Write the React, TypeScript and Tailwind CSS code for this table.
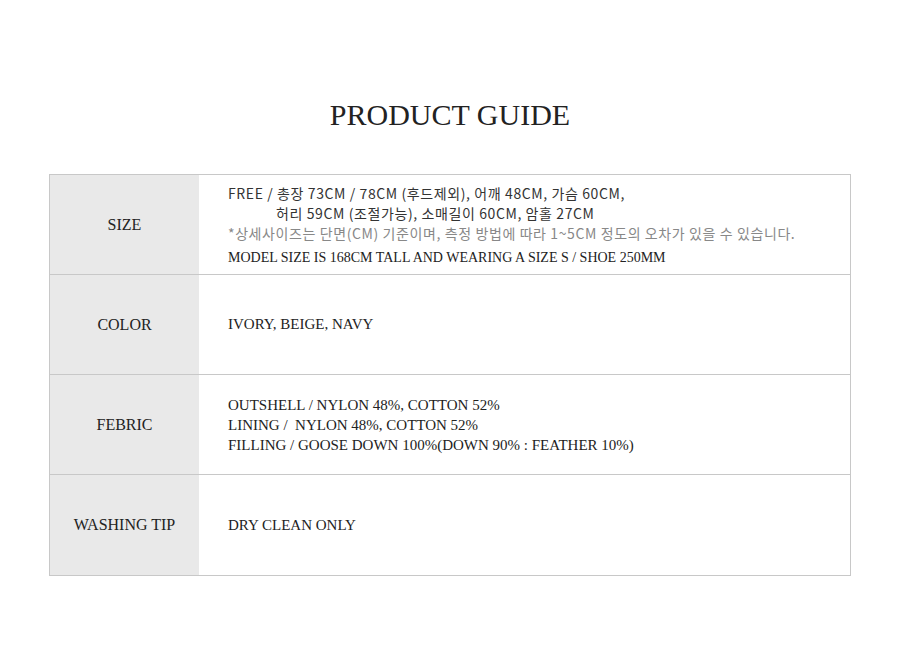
const serif = "font-['Liberation_Serif','Times_New_Roman',serif]";
const kr = "font-['Noto_Sans_CJK_KR','Noto_Sans',sans-serif]";

const Row = ({ label, children, last }: { label: string; children: React.ReactNode; last?: boolean }) => (
  <div className={`flex h-[100px] ${last ? '' : 'border-b border-[#c8c8c8]'}`}>
    <div className={`w-[149px] shrink-0 bg-[#e9e9e9] flex items-center justify-center text-[16px] text-[#222] ${serif}`}>
      {label}
    </div>
    <div className="flex-1 flex flex-col justify-center pl-[29px]">{children}</div>
  </div>
);

export default function App() {
  return (
    <div className="w-[900px] h-[649px] bg-white pt-[96px]">
      <h1 className={`text-center text-[30px] leading-[38px] text-[#222] ${serif}`}>PRODUCT GUIDE</h1>
      <div className="mx-[49px] mt-[40px] border border-[#c8c8c8]">
        <Row label="SIZE">
          <div className={`text-[14px] leading-[20px] tracking-[0.6px] text-[#333] ${kr}`}>
            <p className="pt-[2px]">FREE / 총장 73CM / 78CM (후드제외), 어깨 48CM, 가슴 60CM,</p>
            <p className="pl-[48px]">허리 59CM (조절가능), 소매길이 60CM, 암홀 27CM</p>
            <p className="text-[#888]">*상세사이즈는 단면(CM) 기준이며, 측정 방법에 따라 1~5CM 정도의 오차가 있을 수 있습니다.</p>
          </div>
          <p className={`mt-[4px] text-[14px] text-[#222] ${serif}`}>MODEL SIZE IS 168CM TALL AND WEARING A SIZE S / SHOE 250MM</p>
        </Row>
        <Row label="COLOR">
          <p className={`text-[15px] text-[#222] ${serif}`}>IVORY, BEIGE, NAVY</p>
        </Row>
        <Row label="FEBRIC">
          <div className={`text-[15px] leading-[20px] text-[#222] ${serif} whitespace-pre`}>
            <p>OUTSHELL / NYLON 48%, COTTON 52%</p>
            <p>LINING /  NYLON 48%, COTTON 52%</p>
            <p>FILLING / GOOSE DOWN 100%(DOWN 90% : FEATHER 10%)</p>
          </div>
        </Row>
        <Row label="WASHING TIP" last>
          <p className={`text-[15px] text-[#222] ${serif}`}>DRY CLEAN ONLY</p>
        </Row>
      </div>
    </div>
  );
}
